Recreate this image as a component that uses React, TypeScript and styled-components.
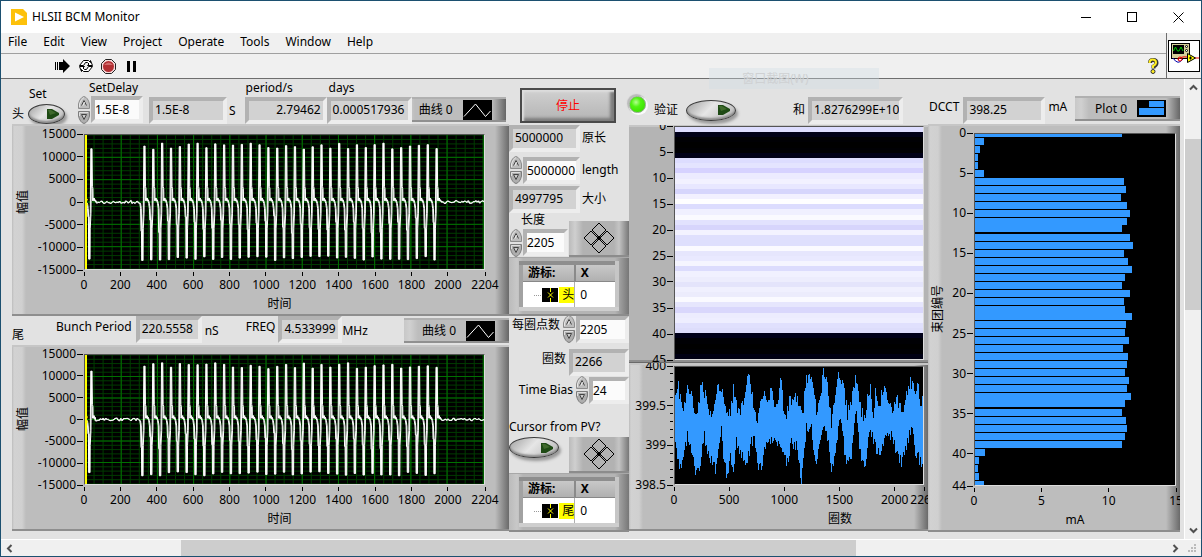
import React from "react";
import styled, { createGlobalStyle, css } from "styled-components";

const GlobalStyle = createGlobalStyle`
  * { box-sizing: border-box; }
  body {
    margin: 0;
    font-family: "Noto Sans", "Noto Sans CJK SC", sans-serif;
    font-size: 12px;
    line-height: 16px;
    color: #000;
  }
  button, input, output, table {
    font: inherit;
    color: inherit;
  }
  svg text { font-size: 12px; }
`;

/* ---------- window frame ---------- */

const Window = styled.div`
  display: flex;
  flex-direction: column;
  min-height: 100vh;
  background: #f0f0f0;
  border: 1px solid #1c5070;
  overflow: hidden;
`;

const TitleBar = styled.header`
  display: flex;
  align-items: center;
  height: 32px;
  padding-left: 10px;
  background: #fff;
`;

const Title = styled.h1`
  flex: 1;
  margin: 0;
  padding-left: 5px;
  font-size: 12px;
  font-weight: 400;
`;

const CaptionButton = styled.button`
  display: grid;
  place-items: center;
  width: 46px;
  height: 32px;
  padding: 0;
  border: 0;
  background: none;
`;

const Bars = styled.div`
  display: flex;
  height: 46px;
  border-bottom: 1px solid #6e6e6e;
`;

const BarStack = styled.div`
  flex: 1;
  display: flex;
  flex-direction: column;
`;

const MenuBar = styled.nav`
  display: flex;
  height: 21px;
  border-bottom: 1px solid #a0a0a0;
`;

const MenuItem = styled.button`
  height: 18px;
  padding: 0 9px 0 7px;
  border: 0;
  background: none;
  white-space: nowrap;
`;

const ToolBar = styled.div`
  flex: 1;
  display: flex;
  align-items: center;
  gap: 6px;
  padding: 0 5px 0 53px;
`;

const ToolButton = styled.button`
  display: grid;
  place-items: center;
  width: 17px;
  height: 18px;
  padding: 0;
  border: 0;
  background: none;
`;

const Grow = styled.div`
  flex: 1;
`;

const ViIconPane = styled.div`
  display: grid;
  place-items: center;
  width: 35px;
  border-left: 1px solid #6e6e6e;
`;

const Body = styled.div`
  flex: 1;
  display: flex;
`;

/* ---------- scroll bars ---------- */

const ScrollTrack = styled.div<{ $vertical?: boolean }>`
  display: flex;
  background: #f0f0f0;
  ${(p) =>
    p.$vertical
      ? css`
          flex-direction: column;
          width: 17px;
          border-left: 1px solid #fff;
        `
      : css`
          height: 17px;
          border-top: 1px solid #fff;
        `}
`;

const ScrollArrow = styled.button`
  flex: 0 0 17px;
  display: grid;
  place-items: center;
  width: 17px;
  height: 17px;
  padding: 0;
  border: 0;
  background: none;
`;

const ScrollSpan = styled.div<{ $share: number; $thumb?: boolean }>`
  flex: ${(p) => p.$share} 1 0;
  background: ${(p) => (p.$thumb ? "#cdcdcd" : "transparent")};
`;

/* ---------- front panel ---------- */

const FrontPanel = styled.main`
  flex: 1;
  min-width: 0;
  display: grid;
  grid-template-columns: minmax(0, 497fr) 120px minmax(0, 299fr) minmax(0, 252fr);
  align-items: start;
  padding: 0 4px 7px 11px;
  background: #e2e2e2;
`;

const Column = styled.section`
  min-width: 0;
  display: flex;
  flex-direction: column;
`;

const Strip = styled.div<{ $height: number; $pad?: number }>`
  display: flex;
  align-items: flex-end;
  height: ${(p) => p.$height}px;
  padding-bottom: ${(p) => p.$pad ?? 0}px;
`;

const Caption = styled.span<{ $left?: number; $right?: number; $lift?: number }>`
  flex: none;
  white-space: nowrap;
  padding-left: ${(p) => p.$left ?? 0}px;
  padding-right: ${(p) => p.$right ?? 0}px;
  padding-bottom: ${(p) => p.$lift ?? 0}px;
`;

const Stack = styled.label<{ $width: number; $gap?: number }>`
  flex: none;
  display: flex;
  flex-direction: column;
  width: ${(p) => p.$width}px;
  margin-right: ${(p) => p.$gap ?? 0}px;
  white-space: nowrap;
`;

const Pair = styled.div`
  display: flex;
`;

const bevel = css`
  height: 27px;
  border: 4px solid;
  border-color: #b2b2b2 #ededed #ededed #b2b2b2;
  line-height: 18px;
`;

const Readout = styled.output<{ $width: number; $end?: boolean }>`
  ${bevel}
  position: relative;
  z-index: 1;
  flex: none;
  display: block;
  width: ${(p) => p.$width}px;
  padding: 0 2px;
  overflow: hidden;
  white-space: nowrap;
  text-align: ${(p) => (p.$end ? "right" : "left")};
  background: #d2d2d2;
`;

const Entry = styled.input<{ $width: number }>`
  ${bevel}
  flex: none;
  width: ${(p) => p.$width}px;
  padding: 0;
  border-radius: 0;
  outline: 0;
  background: #fbfbfb;
`;

const SpinBox = styled.div`
  flex: none;
  display: flex;
  flex-direction: column;
  width: 14px;
  height: 28px;
`;

const SpinButton = styled.button`
  display: block;
  width: 14px;
  height: 14px;
  padding: 0;
  border: 0;
  background: none;
`;

const OvalButton = styled.button<{ $width: number; $height: number }>`
  flex: none;
  display: flex;
  align-items: center;
  justify-content: flex-end;
  width: ${(p) => p.$width}px;
  height: ${(p) => p.$height}px;
  padding: 0 5px 0 0;
  border: 1px solid #3c3c3c;
  border-radius: 50%;
  background: linear-gradient(135deg, #a8a8a8 5%, #e6e6e6 45%, #b8b8b8 95%);
  box-shadow: 2px 3px 3px #999, inset 0 -2px 2px #8e8e8e;
`;

const StopButton = styled.button`
  height: 35px;
  margin: 9px 13px 2px 11px;
  border: 2px solid #4a4a4a;
  color: #f00;
  background: linear-gradient(#d0d0d0, #b4b4b4);
  box-shadow: inset 2px 2px 2px #ddd, inset -4px -3px 3px #7c7c7c;
`;

const Led = styled.span`
  flex: none;
  width: 17px;
  height: 17px;
  border: 1px solid #8fae86;
  border-radius: 50%;
  background: radial-gradient(circle at 40% 35%, #b4ff90 0, #50f312 35%, #3ce000 80%);
  box-shadow: 1px 1px 0 1px #fafafa, -1px -1px 1px 1px #bbb;
`;

const Legend = styled.button<{ $overlap?: boolean; $lift?: number }>`
  flex: none;
  display: flex;
  align-items: center;
  justify-content: flex-end;
  width: 105px;
  height: 25px;
  margin-left: ${(p) => (p.$overlap ? "-11px" : "auto")};
  margin-bottom: ${(p) => p.$lift ?? 0}px;
  padding: 0 14px 0 0;
  gap: 10px;
  border: 0;
  border-top: 2px solid #b0b0b0;
  border-bottom: 2px solid #909090;
  background: linear-gradient(
    90deg,
    #c8c8c8 0,
    #d0d0d0 6px,
    #bdbdbd 14px,
    #bdbdbd calc(100% - 14px),
    #666 100%
  );
`;

const ChartPanel = styled.figure<{ $flat?: boolean; $top: number }>`
  display: grid;
  margin: 0;
  padding-top: ${(p) => p.$top}px;
  overflow: hidden;
  background: ${(p) =>
    p.$flat
      ? "#b4b4b4"
      : `linear-gradient(90deg, #bcbcbc 0, #d2d2d2 2px, #d0d0d0 10px, #bdbdbd 14px,
         #bdbdbd calc(100% - 14px), #6a6a6a 100%)`};
  box-shadow: inset 0 -2px 0 #8e8e8e, inset 0 2px 0 #c6c6c6;
`;

const ScopeGrid = styled(ChartPanel)`
  grid-template-columns: 22px 50px minmax(0, 1fr) 24px;
`;

const MapGrid = styled(ChartPanel)`
  grid-template-columns: 0 45px minmax(0, 1fr) 4px;
  padding-bottom: ${(p) => (p.$flat ? "2px" : "0")};
  border-bottom: ${(p) => (p.$flat ? "1px solid #6a6a6a" : "0")};
`;

const BarGrid = styled(ChartPanel)`
  grid-template-columns: 20px 26px minmax(0, 1fr) 4px;
`;

const Plot = styled.div<{ $height: number }>`
  grid-column: 3;
  grid-row: 1;
  height: ${(p) => p.$height}px;
  border: 1px solid;
  border-color: #555 #dcdcdc #dcdcdc #555;
  background: #000;
`;

const PlotSvg = styled.svg`
  display: block;
  width: 100%;
  height: 100%;
`;

const SideTitle = styled.span`
  grid-column: 1;
  grid-row: 1;
  justify-self: center;
  align-self: center;
  writing-mode: vertical-rl;
  text-orientation: sideways;
  transform: rotate(180deg);
`;

const SideAxis = styled.svg`
  grid-column: 2;
  grid-row: 1;
  width: 100%;
  height: 0;
  min-height: 100%;
  overflow: visible;
`;

const FootAxis = styled.svg`
  grid-column: 3;
  grid-row: 2;
  display: block;
  width: 100%;
  height: 26px;
  overflow: visible;
`;

const FootTitle = styled.figcaption<{ $before?: number; $after?: number }>`
  grid-column: 3;
  grid-row: 3;
  height: 20px;
  padding-left: ${(p) => p.$before ?? 0}px;
  padding-right: ${(p) => p.$after ?? 0}px;
  text-align: center;
`;

const GroupBox = styled.div`
  display: flex;
  flex: none;
  align-items: center;
  justify-content: center;
  width: 60px;
  height: 36px;
  margin-left: auto;
  border-bottom: 2px solid #8c8c8c;
  background: linear-gradient(90deg, #bbb 0, #cfcfcf 6px, #b2b2b2 14px, #b2b2b2 45px, #c4c4c4 50px, #777 100%);
`;

const PadButton = styled.button`
  width: 34px;
  height: 32px;
  padding: 0;
  border: 0;
  background: none;
`;

const CursorPanel = styled.div`
  height: 59px;
  padding: 4px 10px;
  background: linear-gradient(90deg, #bbb 0, #c8c8c8 8px, #b4b4b4 14px, #b4b4b4 106px, #777 100%);
  box-shadow: inset 0 -2px 0 #8c8c8c, inset 0 1px 0 #a8a8a8;
`;

const CursorTable = styled.table`
  width: 100%;
  height: 50px;
  border-collapse: collapse;
  table-layout: fixed;
  border: 4px solid;
  border-color: #8e8e8e #c6c6c6 #cecece #a2a2a2;
  background: #fff;

  th {
    height: 18px;
    padding: 0 0 0 5px;
    text-align: left;
    line-height: 16px;
    border-right: 2px solid #8a8a8a;
    border-bottom: 1px solid #888;
    background: linear-gradient(#c8c8c8, #b0b0b0);
  }
  th:last-child { border-right: 0; }
  td { padding: 0 0 0 5px; height: 20px; }
  td:first-child {
    padding: 0;
    border-right: 1px solid #b0b0b0;
  }
`;

const CursorName = styled.div`
  display: flex;
  align-items: center;
  justify-content: flex-end;
  gap: 1px;
`;

const Tag = styled.span`
  padding: 0 0 0 3px;
  background: #ff0;
`;

const MidRow = styled.div<{ $height: number; $end?: boolean }>`
  display: flex;
  flex: none;
  align-items: center;
  justify-content: ${(p) => (p.$end ? "flex-end" : "flex-start")};
  height: ${(p) => p.$height}px;
`;

const OvalSlot = styled.div`
  height: 36px;
`;

const TopRow = styled.div`
  display: flex;
  align-items: center;
  height: 46px;
  padding: 17px 25px 1px 0;
`;

const RaisedLed = styled.div`
  display: flex;
  align-self: flex-start;
  padding-right: 8px;
`;

const SnipGhost = styled.div`
  position: absolute;
  top: 68px;
  left: 59%;
  width: 170px;
  height: 21px;
  line-height: 21px;
  padding-left: 33px;
  color: #cfd1d3;
  background: rgba(205, 220, 228, 0.35);
  pointer-events: none;
`;

/* ---------- data ---------- */

const noise = (n: number) => {
  const s = Math.sin(n * 127.1 + 11.7) * 43758.5453;
  return s - Math.floor(s);
};

const PULSES = [34, ...Array.from({ length: 34 }, (_, i) => 327 + i * 48.9)];

const scopeTrace = (seed: number, shift: number) => {
  const pts: [number, number][] = [[0, 0]];
  const quiet = (from: number, to: number) => {
    for (let t = from; t < to; t += 7) pts.push([t, (noise(t + seed) - 0.5) * 700]);
  };
  PULSES.forEach((t, i) => {
    const high = 11700 + noise(i + seed) * 1500 - (i === 0 ? 800 : 0);
    const low = -12100 - noise(i * 3 + seed) * 1000;
    const knee = -3000 - noise(i * 7 + 3) * 4000;
    pts.push(
      [t - 24, -300], [t - 20, -1500], [t - 18, knee], [t - 15, knee], [t - 14, low], [t - 10, low],
      [t - 9, -6000], [t - 5, -2500], [t - 2, high], [t + 1, high], [t + 3, 3500],
      [t + 6, 3000], [t + 7, 300], [t + 13, 900], [t + 16, 200], [t + 19, 500]
    );
    if (i === 0) quiet(t + 22, 300);
  });
  quiet(1968, 2204);
  pts.push([2204, 0]);
  return pts.map(([x, y]) => `${x + shift},${Math.round(15000 - y)}`).join(" ");
};

const BUNCHES = [
  11, 0.7, 0.4, 0.25, 0.25, 0.7, 11.15, 11.3, 10.95, 11.4, 11.6, 11.4, 11, 11.6, 11.85, 11.15, 11.45,
  11.75, 11.25, 11, 11.6, 11.15, 11.25, 11.75, 11.3, 11.25, 11.55, 11.1, 11.5, 11.4, 11.25, 11.55,
  11.4, 11.7, 11.25, 11.05, 11.35, 11.4, 11.25, 11.05, 0.75, 0.3, 0.22, 0.3, 0.68,
];

const MAP_ROWS = (
  "ddddff 000018 000004 000000 000004 000018 ddddff e4e4ff d6d2ff ecebff f2f1ff e8e7ff d6d5fc f2f0ff fefeff " +
  "dcdcfe f0f0ff fafaff e2e2fe d7d5fc f3f2ff dfdffd dedffd fafaff e6e6fd e9e9ff f5f5ff dcdcfd f1f1ff ededfd " +
  "e4e4fb f0f0fe ececfc fafaff e6e6fd d9d7fc ececfe eeeeff e0e0fd ddddfb 000018 000004 000000 000004 000014"
).split(" ");

const UPPER = [
  0, 23, 3, 18, 6, 33, 9, 36, 12, 13, 16, 24, 20, 51, 23, 36, 26, 12, 30, 26, 36, 50, 40, 34, 42, 16, 45, 28,
  48, 23, 52, 45, 55, 46, 58, 18, 62, 43, 65, 45, 69, 36, 74, 4, 78, 26, 82, 56, 85, 36, 90, 20, 93, 30,
  97, 18, 100, 43, 107, 11, 110, 49, 115, 33, 120, 25, 125, 40, 128, 46, 132, 8, 137, 11, 142, 43, 145, 36,
  149, 0, 153, 16, 157, 53, 160, 33, 164, 5, 168, 10, 173, 45, 177, 30, 181, 6, 185, 30, 188, 43, 191, 50,
  193, 35, 197, 20, 200, 45, 202, 23, 205, 43, 210, 16, 215, 30, 218, 43, 222, 31, 225, 33, 228, 41, 232, 31,
  237, 10, 241, 23, 244, 16, 247, 33, 250, 35,
];

const LOWER = [
  0, 80, 5, 102, 8, 88, 12, 71, 17, 90, 20, 106, 24, 100, 29, 71, 35, 93, 40, 104, 46, 63, 48, 88, 52, 113,
  55, 90, 58, 110, 61, 68, 65, 85, 72, 98, 77, 76, 80, 70, 83, 100, 87, 103, 90, 86, 95, 73, 98, 78, 102, 71,
  105, 83, 113, 96, 117, 76, 122, 80, 127, 115, 132, 61, 137, 60, 141, 96, 145, 83, 150, 58, 153, 70, 157, 106,
  162, 78, 166, 48, 172, 101, 177, 91, 182, 42, 185, 78, 188, 98, 192, 96, 197, 60, 200, 76, 207, 91, 212, 70,
  218, 68, 223, 86, 228, 96, 233, 81, 238, 60, 242, 86, 245, 91, 250, 102,
];

const sample = (knots: number[], x: number) => {
  let i = 0;
  while (i < knots.length - 4 && knots[i + 2] < x) i += 2;
  const f = (x - knots[i]) / (knots[i + 2] - knots[i]);
  return knots[i + 1] + (knots[i + 3] - knots[i + 1]) * f;
};

const bandPath = () => {
  const parts: string[] = [];
  for (let x = 0; x < 250; x++) {
    const a = Math.max(0, Math.round(sample(UPPER, x) + (noise(x) - 0.35) * 14));
    const b = Math.min(116, Math.round(sample(LOWER, x) - (noise(x + 400) - 0.35) * 12));
    parts.push(`M${x} ${a}h1V${b}h-1z`);
  }
  return parts.join("");
};

/* ---------- drawings ---------- */

const range = (from: number, to: number, step: number) =>
  Array.from({ length: Math.floor((to - from) / step) + 1 }, (_, i) => from + i * step);

type Tick = [label: string, percent: number];

const YTicks = ({ ticks, width, minor = [] }: { ticks: Tick[]; width: number; minor?: number[] }) => (
  <SideAxis>
    {ticks.map(([label, p]) => (
      <g key={label}>
        <text x={width - 8} y={`${p}%`} dy="4" textAnchor="end">{label}</text>
        <line x1={width - 7} x2={width - 1} y1={`${p}%`} y2={`${p}%`} stroke="#000" shapeRendering="crispEdges" />
      </g>
    ))}
    {minor.map((p) => (
      <line key={p} x1={width - 4} x2={width - 1} y1={`${p}%`} y2={`${p}%`} stroke="#000" shapeRendering="crispEdges" />
    ))}
  </SideAxis>
);

const XTicks = ({ ticks }: { ticks: Tick[] }) => (
  <FootAxis>
    {ticks.map(([label, p]) => (
      <g key={label}>
        <line x1={`${p}%`} x2={`${p}%`} y1="2" y2="6" stroke="#000" shapeRendering="crispEdges" />
        <text x={`${p}%`} y="19" textAnchor="middle">{label}</text>
      </g>
    ))}
  </FootAxis>
);

const SCOPE_Y: Tick[] = range(-15000, 15000, 5000).map((v) => [String(v), ((15000 - v) / 30000) * 100]);
const SCOPE_X: Tick[] = [...range(0, 2000, 200), 2204].map((v) => [String(v), (v / 2204) * 100]);

const ScopeChart = ({ height, top, seed }: { height: number; top: number; seed: number }) => (
  <ScopeGrid $top={top}>
    <SideTitle>幅值</SideTitle>
    <YTicks ticks={SCOPE_Y} width={50} />
    <Plot $height={height}>
      <PlotSvg viewBox="0 0 2204 30000" preserveAspectRatio="none">
        <g stroke="#003c00" shapeRendering="crispEdges">
          {range(0, 30000, 1000).map((y) => (
            <line key={y} x1="0" x2="2204" y1={y} y2={y} vectorEffect="non-scaling-stroke" />
          ))}
          {range(0, 2200, 50).map((x) => (
            <line key={x} x1={x} x2={x} y1="0" y2="30000" vectorEffect="non-scaling-stroke" />
          ))}
        </g>
        <g stroke="#007000" shapeRendering="crispEdges">
          {range(5000, 25000, 5000).map((y) => (
            <line key={y} x1="0" x2="2204" y1={y} y2={y} vectorEffect="non-scaling-stroke" />
          ))}
          {range(0, 2200, 200).map((x) => (
            <line key={x} x1={x} x2={x} y1="0" y2="30000" vectorEffect="non-scaling-stroke" />
          ))}
        </g>
        {[0, 4].map((shift) => (
          <polyline
            key={shift}
            points={scopeTrace(seed, shift)}
            fill="none"
            stroke="#fff"
            strokeLinejoin="bevel"
            vectorEffect="non-scaling-stroke"
            shapeRendering="crispEdges"
          />
        ))}
        <rect width="9" height="30000" fill="#ff0" shapeRendering="crispEdges" />
        <path d="M0 14300L14 15700M0 15700L14 14300" stroke="#ff0" vectorEffect="non-scaling-stroke" />
      </PlotSvg>
    </Plot>
    <XTicks ticks={SCOPE_X} />
    <FootTitle $after={10}>时间</FootTitle>
  </ScopeGrid>
);

const Spinner = ({ name }: { name: string }) => (
  <SpinBox>
    <SpinButton aria-label={`${name} increment`}>
      <svg width="14" height="14" viewBox="0 0 14 14">
        <path d="M1.500 12.500V8Q3 1.500 7 .5Q11 1.500 12.500 8V12.500z" fill="#bdbdbd" stroke="#8c8c8c" />
        <path d="M2.500 11V8Q4 3 7 1.500" fill="none" stroke="#e6e6e6" />
        <path d="M4.500 9.500L7 4.500L9.500 9.500" fill="none" stroke="#444" />
        <path d="M6 9.500L7.500 6" stroke="#eee" />
      </svg>
    </SpinButton>
    <SpinButton aria-label={`${name} decrement`}>
      <svg width="14" height="14" viewBox="0 0 14 14">
        <path d="M1.500 1.500V6Q3 12.500 7 13.500Q11 12.500 12.500 6V1.500z" fill="#aeaeae" stroke="#7c7c7c" />
        <path d="M2.500 6V2.500H11" fill="none" stroke="#dedede" />
        <path d="M4.500 4.500H9.500L7 9.500z" fill="#ccc" stroke="#444" />
      </svg>
    </SpinButton>
  </SpinBox>
);

const Oval = ({ name, width, height }: { name: string; width: number; height: number }) => (
  <OvalButton $width={width} $height={height} aria-label={name}>
    <svg width="12" height="12" viewBox="0 0 12 12">
      <path d="M0 1H5L12 5V7L5 11H0z" fill="#1e4a14" />
      <path d="M1 2H4L9 5L3 7z" fill="#3f6a2c" />
    </svg>
  </OvalButton>
);

const CurveLegend = ({ overlap, lift }: { overlap?: boolean; lift?: number }) => (
  <Legend $overlap={overlap} $lift={lift}>
    曲线 0
    <svg width="29" height="20" viewBox="0 0 29 20">
      <rect width="29" height="20" />
      <path d="M1 16.500L12.500 4L22.500 16.500L27.500 11" fill="none" stroke="#fff" />
    </svg>
  </Legend>
);

const CursorMover = () => (
  <GroupBox>
    <PadButton aria-label="Cursor mover">
      <svg width="34" height="32" viewBox="0 0 34 32" fill="none" stroke="#000">
        <path d="M17 1L24 8L17 15L10 8zM17 17L24 24L17 31L10 24zM9 9L16 16L9 23L2 16zM25 9L32 16L25 23L18 16z" />
        <path d="M15.500 14.500L18.500 17.500M18.500 14.500L15.500 17.500" />
      </svg>
    </PadButton>
  </GroupBox>
);

const CursorList = ({ name }: { name: string }) => (
  <CursorPanel>
    <CursorTable>
      <colgroup>
        <col width="56%" />
        <col />
      </colgroup>
      <thead>
        <tr>
          <th scope="col">游标:</th>
          <th scope="col">X</th>
        </tr>
      </thead>
      <tbody>
        <tr>
          <td>
            <CursorName>
              <svg width="24" height="14" viewBox="0 0 24 14">
                <path d="M0 7.500H8" stroke="#999" strokeDasharray="1 1" />
                <rect x="8" width="16" height="14" />
                <path d="M16.500 0V4M16.500 10V14M14 4.500L19 9.500M19 4.500L14 9.500" stroke="#ff0" />
              </svg>
              <Tag>{name}</Tag>
            </CursorName>
          </td>
          <td>0</td>
        </tr>
      </tbody>
    </CursorTable>
  </CursorPanel>
);

const Chevron = ({ d }: { d: string }) => (
  <svg width="9" height="9" viewBox="0 0 9 9">
    <path d={d} fill="none" stroke="#505050" strokeWidth="2" />
  </svg>
);

const VI_MENU = ["File", "Edit", "View", "Project", "Operate", "Tools", "Window", "Help"];

const LOOP_ARROW = "M1.500 6.500L5.500 1.500H10.500L12.500 3.500V1.500L14.500 6.500H9.500L11 5L9.500 3.500H7.500L5.500 6.500z";

/* ---------- page ---------- */

export default function App() {
  return (
    <>
      <GlobalStyle />
      <Window>
        <TitleBar>
          <svg width="16" height="16" viewBox="0 0 16 16">
            <path d="M0 0H12L16 4V16H0z" fill="#fdc10b" />
            <path d="M4 3.500L13 8L4 12.500z" fill="#fff" />
          </svg>
          <Title>HLSII BCM Monitor</Title>
          <CaptionButton aria-label="Minimize">
            <svg width="11" height="11"><path d="M0 5.500H10" stroke="#000" /></svg>
          </CaptionButton>
          <CaptionButton aria-label="Maximize">
            <svg width="11" height="11"><rect x=".5" y=".5" width="9" height="9" fill="none" stroke="#000" /></svg>
          </CaptionButton>
          <CaptionButton aria-label="Close">
            <svg width="11" height="11"><path d="M.5 .5L10.500 10.500M10.500 .5L.5 10.500" stroke="#000" /></svg>
          </CaptionButton>
        </TitleBar>

        <Bars>
          <BarStack>
            <MenuBar>
              {VI_MENU.map((m) => (
                <MenuItem key={m}>{m}</MenuItem>
              ))}
            </MenuBar>
            <ToolBar>
              <ToolButton aria-label="Run">
                <svg width="16" height="14" viewBox="0 0 16 14">
                  <path d="M.5 3V11M2.500 3V11M4.500 3V11" stroke="#000" />
                  <path d="M5 3H8V0L15 7L8 14V11H5z" />
                </svg>
              </ToolButton>
              <ToolButton aria-label="Run continuously">
                <svg width="16" height="14" viewBox="0 0 16 14" fill="#fff" stroke="#000">
                  <path d={LOOP_ARROW} />
                  <path d={LOOP_ARROW} transform="rotate(180 8 7)" />
                </svg>
              </ToolButton>
              <ToolButton aria-label="Abort">
                <svg width="15" height="15" viewBox="0 0 15 15">
                  <path d="M4.500 .5H10.500L14.500 4.500V10.500L10.500 14.500H4.500L.5 10.500V4.500z" fill="#f4dcdc" stroke="#222" />
                  <circle cx="7.500" cy="7.500" r="5.500" fill="#b32f33" />
                  <path d="M3 6Q7.500 1 12 6z" fill="#d06a6a" />
                </svg>
              </ToolButton>
              <ToolButton aria-label="Pause">
                <svg width="10" height="11"><path d="M0 0H3V11H0zM6 0H9V11H6z" /></svg>
              </ToolButton>
              <Grow />
              <ToolButton aria-label="Context help">
                <svg width="12" height="16" viewBox="0 0 12 16">
                  <path d="M3 5Q3 2 6 2Q9.500 2 9.500 5Q9.500 7 6.500 8.500V10.500" fill="none" stroke="#333" strokeWidth="4" />
                  <path d="M2.500 5Q2.500 1.500 5.500 1.500Q9 1.500 9 4.500Q9 6.500 6 8V10" fill="none" stroke="#ffee20" strokeWidth="2" />
                  <circle cx="6" cy="13.500" r="2" fill="#ffee20" stroke="#333" />
                </svg>
              </ToolButton>
            </ToolBar>
          </BarStack>
          <ViIconPane>
            <svg width="32" height="32" viewBox="0 0 32 32">
              <rect x=".5" y=".5" width="31" height="31" fill="#fff" stroke="#000" />
              <rect x="3.500" y="3.500" width="18" height="15" fill="#d6cf9a" stroke="#000" />
              <rect x="5" y="5" width="11" height="9" />
              <path d="M5.500 11L7.500 7L9.500 11H11L13 7L15 11" fill="none" stroke="#0c0" />
              <circle cx="18.500" cy="6.500" r="1" fill="#fff" stroke="#000" />
              <circle cx="18.500" cy="10.500" r="1" fill="#fff" stroke="#000" />
              <path d="M5 18Q10 26 15 19" fill="none" stroke="#00a" />
              <path d="M10 20Q13 16 19 17M27 18H31" fill="none" stroke="#e00" />
              <circle cx="12" cy="19" r="2" fill="none" stroke="#e00" />
              <path d="M19.500 13.500L27.500 18L19.500 22.500z" fill="#ff0" stroke="#000" />
              <path d="M21 18H24M22.500 16.500V19.500" stroke="#000" />
            </svg>
          </ViIconPane>
        </Bars>

        <Body>
          <FrontPanel>
            <Column>
              <Strip $height={45}>
                <Caption $right={4} $lift={2}>头</Caption>
                <Stack $width={41} $gap={8}>
                  <Caption $left={1} $lift={2}>Set</Caption>
                  <Oval name="Set" width={37} height={20} />
                </Stack>
                <Stack $width={66} $gap={6}>
                  <Caption $left={12}>SetDelay</Caption>
                  <Pair>
                    <Spinner name="SetDelay" />
                    <Entry $width={52} defaultValue="1.5E-8" aria-label="SetDelay" />
                  </Pair>
                </Stack>
                <Readout $width={78}>1.5E-8</Readout>
                <Caption $left={2} $right={9} $lift={5}>S</Caption>
                <Stack $width={82}>
                  <Caption $left={1} $lift={1}>period/s</Caption>
                  <Readout $width={82} $end>2.79462</Readout>
                </Stack>
                <Stack $width={85}>
                  <Caption $left={2} $lift={1}>days</Caption>
                  <Readout $width={85}>0.000517936</Readout>
                </Stack>
                <CurveLegend overlap lift={2} />
              </Strip>
              <ScopeChart height={136} top={10} seed={1} />
              <Strip $height={29} $pad={2}>
                <Caption $right={32}>尾</Caption>
                <Caption $right={4} $lift={8}>Bunch Period</Caption>
                <Readout $width={66}>220.5558</Readout>
                <Caption $left={3} $right={27} $lift={4}>nS</Caption>
                <Caption $right={3} $lift={8}>FREQ</Caption>
                <Readout $width={64}>4.533999</Readout>
                <Caption $lift={4}>MHz</Caption>
                <CurveLegend />
              </Strip>
              <ScopeChart height={131} top={9} seed={5} />
            </Column>

            <Column>
              <StopButton>停止</StopButton>
              <MidRow $height={26}>
                <Readout $width={71}>5000000</Readout>
                <Caption $left={2}>原长</Caption>
              </MidRow>
              <MidRow $height={38}>
                <Spinner name="length" />
                <Entry $width={57} defaultValue="5000000" aria-label="length" />
                <Caption $left={2}>length</Caption>
              </MidRow>
              <MidRow $height={20}>
                <Readout $width={71}>4997795</Readout>
                <Caption $left={2}>大小</Caption>
              </MidRow>
              <Strip $height={48}>
                <Stack $width={59}>
                  <Caption $left={12} $lift={1}>长度</Caption>
                  <Pair>
                    <Spinner name="长度" />
                    <Entry $width={45} defaultValue="2205" aria-label="长度" />
                  </Pair>
                </Stack>
                <CursorMover />
              </Strip>
              <CursorList name="头" />
              <MidRow $height={26} $end>
                <Caption $right={2} $lift={8}>每圈点数</Caption>
                <Spinner name="每圈点数" />
                <Entry $width={53} defaultValue="2205" aria-label="每圈点数" />
              </MidRow>
              <MidRow $height={40} $end>
                <Caption $right={3} $lift={6}>圈数</Caption>
                <Readout $width={60}>2266</Readout>
              </MidRow>
              <MidRow $height={16} $end>
                <Caption $right={2}>Time Bias</Caption>
                <Spinner name="Time Bias" />
                <Entry $width={40} defaultValue="24" aria-label="Time Bias" />
              </MidRow>
              <Strip $height={75}>
                <Stack as="div" $width={60}>
                  <Caption $lift={2}>Cursor from PV?</Caption>
                  <OvalSlot>
                    <Oval name="Cursor from PV?" width={50} height={21} />
                  </OvalSlot>
                </Stack>
                <CursorMover />
              </Strip>
              <CursorList name="尾" />
            </Column>

            <Column>
              <TopRow>
                <RaisedLed>
                  <Led />
                </RaisedLed>
                <Caption $right={8}>验证</Caption>
                <Oval name="验证" width={50} height={21} />
                <Grow />
                <Caption $right={3}>和</Caption>
                <Readout $width={95}>1.8276299E+10</Readout>
              </TopRow>
              <MapGrid $top={1} $flat>
                <YTicks width={45} ticks={range(0, 45, 5).map((v) => [String(v), (v / 45) * 100] as Tick)} />
                <Plot $height={234}>
                  <PlotSvg viewBox="0 0 1 45" preserveAspectRatio="none" shapeRendering="crispEdges">
                    {MAP_ROWS.map((c, i) => (
                      <rect key={i} y={i} width="1" height="1" fill={`#${c}`} />
                    ))}
                  </PlotSvg>
                </Plot>
              </MapGrid>
              <MapGrid $top={3}>
                <YTicks
                  width={45}
                  ticks={[["400", 0], ["399.5", 33.3], ["399", 66.6], ["398.5", 100]]}
                  minor={[6.7, 13.3, 20, 26.7, 40, 46.7, 53.3, 60, 73.3, 80, 86.7, 93.3]}
                />
                <Plot $height={119}>
                  <PlotSvg viewBox="0 0 250 116" preserveAspectRatio="none" shapeRendering="crispEdges">
                    <path d={bandPath()} fill="#3399ff" />
                  </PlotSvg>
                </Plot>
                <XTicks ticks={[0, 500, 1000, 1500, 2000, 2266].map((v) => [String(v), (v / 2266) * 100] as Tick)} />
                <FootTitle $before={82}>圈数</FootTitle>
              </MapGrid>
            </Column>

            <Column>
              <Strip $height={45}>
                <Caption $left={1} $right={4} $lift={9}>DCCT</Caption>
                <Readout $width={82}>398.25</Readout>
                <Caption $left={3} $lift={9}>mA</Caption>
                <Legend $lift={3}>
                  Plot 0
                  <svg width="29" height="17" viewBox="0 0 29 17" shapeRendering="crispEdges">
                    <rect width="29" height="17" />
                    <path d="M12 1H27V7H12zM2 8H27V15H2z" fill="#3399ff" />
                  </svg>
                </Legend>
              </Strip>
              <BarGrid $top={9}>
                <SideTitle>束团编号</SideTitle>
                <YTicks
                  width={26}
                  ticks={[...range(0, 40, 5), 44].map((v) => [String(v), (v / 44) * 100] as Tick)}
                />
                <Plot $height={353}>
                  <PlotSvg viewBox="0 0 15 351" preserveAspectRatio="none" shapeRendering="crispEdges">
                    {BUNCHES.map((v, i) => (
                      <rect
                        key={i}
                        y={Math.round((i * 351) / 44) - (i === 12 || i === 34 ? 5 : 4)}
                        width={v}
                        height="7"
                        fill="#3399ff"
                      />
                    ))}
                  </PlotSvg>
                </Plot>
                <XTicks ticks={[0, 5, 10, 15].map((v) => [String(v), (v / 15) * 100] as Tick)} />
                <FootTitle>mA</FootTitle>
              </BarGrid>
            </Column>
          </FrontPanel>

          <ScrollTrack $vertical>
            <ScrollArrow aria-label="Scroll up">
              <Chevron d="M1 6.500L4.500 3L8 6.500" />
            </ScrollArrow>
            <ScrollSpan $share={43} />
            <ScrollSpan $share={171} $thumb />
            <ScrollSpan $share={212} />
            <ScrollArrow aria-label="Scroll down">
              <Chevron d="M1 2.500L4.500 6L8 2.500" />
            </ScrollArrow>
          </ScrollTrack>
        </Body>

        <ScrollTrack>
          <ScrollArrow aria-label="Scroll left">
            <Chevron d="M6.500 1L3 4.500L6.500 8" />
          </ScrollArrow>
          <ScrollSpan $share={163} />
          <ScrollSpan $share={675} $thumb />
          <ScrollSpan $share={311} />
          <ScrollArrow aria-label="Scroll right">
            <Chevron d="M2.500 1L6 4.500L2.500 8" />
          </ScrollArrow>
          <ScrollArrow as="span">
            <svg width="9" height="9" fill="#bbb">
              <path d="M6 0H8V2H6zM3 3H5V5H3zM6 3H8V5H6zM0 6H2V8H0zM3 6H5V8H3zM6 6H8V8H6z" />
            </svg>
          </ScrollArrow>
        </ScrollTrack>
        <SnipGhost aria-hidden="true">窗口截图(W)</SnipGhost>
      </Window>
    </>
  );
}
